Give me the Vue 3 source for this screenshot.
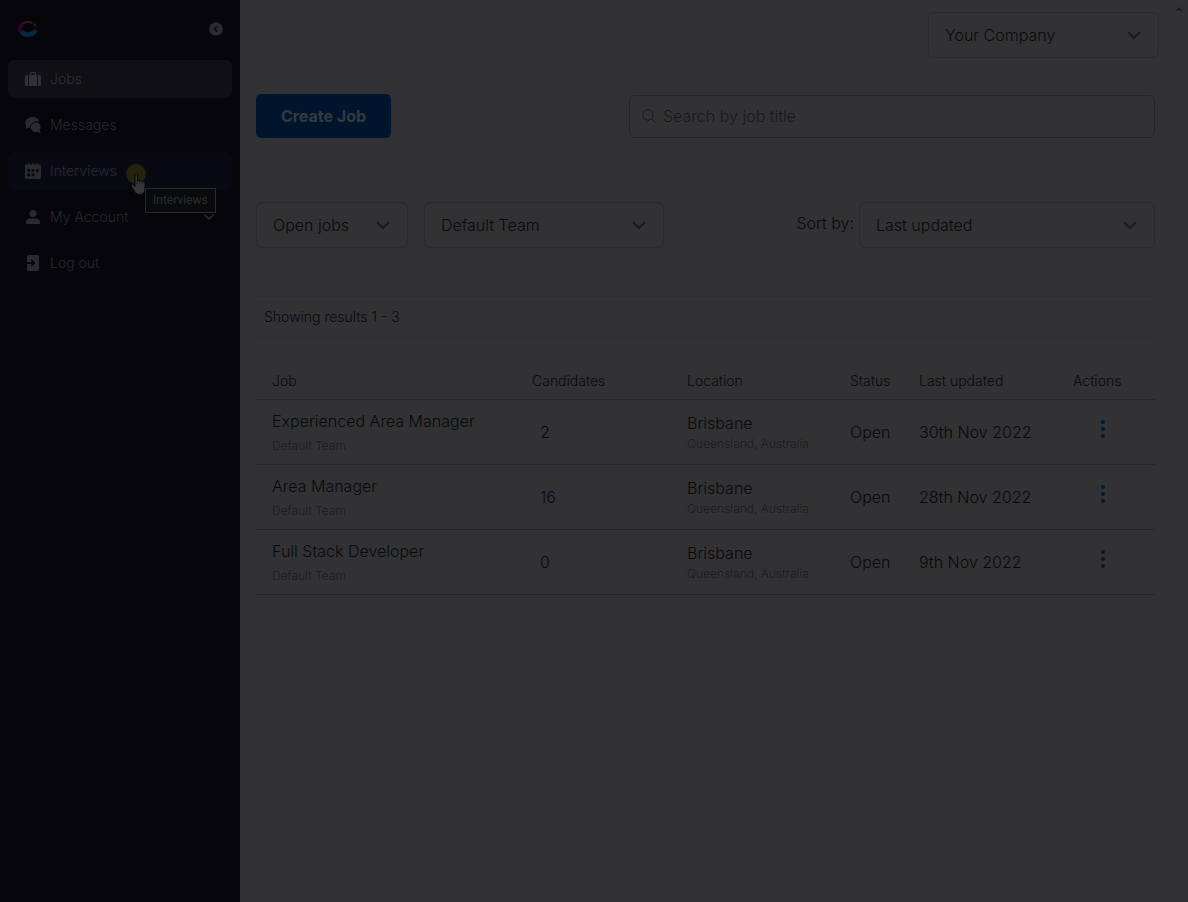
<template>
  <div class="app">
    <aside class="sidebar">
      <div class="brand">
        <svg class="logo" viewBox="0 0 20 16">
          <path d="M3 11C.5 7.500 2 4 5.500 2.700" stroke="#2c0626" stroke-width="4" />
          <path d="M5 2.200C8 .8 12 .8 14.500 2.200" stroke="#352018" stroke-width="2" />
          <circle cx="17" cy="4" r="1.400" fill="#35191c" />
          <path d="M3.500 10.500C6 14.800 14 15 18 9" stroke="#06293b" stroke-width="4.500" />
        </svg>
        <button class="collapse" aria-label="Collapse menu">
          <svg viewBox="0 0 14 14">
            <circle cx="7" cy="7" r="6.800" fill="#2a2a2f" />
            <path d="M8.200 4.200L5.500 7l2.700 2.800" stroke="#07070c" stroke-width="1.600" />
          </svg>
        </button>
      </div>

      <nav class="menu">
        <a href="#" class="item active">
          <svg class="icon" viewBox="0 0 16 16">
            <path d="M1.500 4H3v11H1.500A1.500 1.500 0 0 1 0 13.500v-8A1.500 1.500 0 0 1 1.500 4zM13 4h1.500A1.500 1.500 0 0 1 16 5.500v8a1.500 1.500 0 0 1-1.500 1.500H13zM4 4h1V2a1 1 0 0 1 1-1h4a1 1 0 0 1 1 1v2h1v11H4zM6.200 4h3.600V2.300H6.200z" fill-rule="evenodd" />
          </svg>
          <span>Jobs</span>
        </a>
        <a href="#" class="item">
          <svg class="icon" viewBox="0 0 16 16">
            <path d="M7.500 0c3.600 0 6.500 1.900 7 4.600C9.500 3.300 5.300 6.200 5 11c-.5-.1-1-.2-1.400-.4-.9.800-2 1.200-3.600 1.200.8-.8 1.200-1.600 1.400-2.600C.7 8.300.3 7 .3 5.700.3 2.500 3.500 0 7.500 0z" />
            <path d="M11 5.600c2.600 0 4.600 1.900 4.600 4.400 0 1.200-.4 2.200-1.100 3 .2 1.100.7 2 1.500 2.900-1.400.1-2.500-.2-3.500-1-3.600.9-6.700-1.300-6.700-4.400 0-2.800 2.200-4.900 5.200-4.900z" />
          </svg>
          <span>Messages</span>
        </a>
        <a href="#" class="item hover">
          <svg class="icon" viewBox="0 0 16 16">
            <path d="M1 1.500h2V0h1.600v1.500h2.600V0h1.600v1.500h2.600V0H13v1.500h2A1 1 0 0 1 16 2.500V15a1 1 0 0 1-1 1H1a1 1 0 0 1-1-1V2.500A1 1 0 0 1 1 1.500zM6.600 6v2.800h2.800V6zM11 6v2.800h2.800V6zM2.200 10.400v2.800H5v-2.800zM6.600 10.400v2.800h2.800v-2.800zM2.200 6v2.800H5V6z" fill-rule="evenodd" />
          </svg>
          <span>Interviews</span>
          <i class="spot"></i>
          <svg class="hand" viewBox="0 0 17 23">
            <path d="M5 1.500C5 .6 7.500.6 7.500 1.500V8c.6-1 2.500-.6 2.500.5.600-.9 2.400-.5 2.500.6.700-.7 2.500-.3 2.500 1.200V16c0 3.500-2 5.500-5.500 5.500-3 0-4.400-1.500-5.500-3.700L1.200 13c-.6-1.500 1.200-2.300 2.200-1.200L5 13.500z" fill="#363636" stroke="#050507" />
            <path d="M7.500 8v3M10 8.800v2.500M12.500 9.500v2" stroke="#19191b" stroke-width=".8" />
          </svg>
          <span class="tooltip">Interviews</span>
        </a>
        <button class="item">
          <svg class="icon" viewBox="0 0 16 16">
            <circle cx="8" cy="4.500" r="3.500" />
            <path d="M1 15v-1.500C1 10.500 3.500 9.500 5.500 9.500h5c2 0 4.500 1 4.500 4V15z" />
          </svg>
          <span>My Account</span>
          <svg class="chevron small" viewBox="0 0 14 8"><path d="M1.500 1L7 6.500 12.500 1" /></svg>
        </button>
        <a href="#" class="item">
          <svg class="icon" viewBox="0 0 16 16">
            <path d="M3.500 0h9A1.500 1.500 0 0 1 14 1.500v13a1.500 1.500 0 0 1-1.500 1.500h-9A1.500 1.500 0 0 1 2 14.500V9h5.200l-1.600 1.600 1.100 1.100L10.500 8 6.700 4.300 5.600 5.400 7.200 7H2V1.500A1.500 1.500 0 0 1 3.500 0z" />
          </svg>
          <span>Log out</span>
        </a>
      </nav>
    </aside>

    <main class="main">
      <i class="scroll-arrow"></i>
      <header class="top">
        <div class="select company">
          <select aria-label="Company">
            <option>Your Company</option>
          </select>
          <svg class="chevron" viewBox="0 0 14 8"><path d="M1 1l6 6 6-6" /></svg>
        </div>
      </header>

      <section class="tools">
        <button class="create">Create Job</button>
        <label class="search">
          <svg viewBox="0 0 14 14">
            <circle cx="6" cy="6" r="5.200" />
            <path d="M9.800 9.800l3.700 3.700" />
          </svg>
          <input type="text" placeholder="Search by job title" aria-label="Search by job title">
        </label>
      </section>

      <section class="filters">
        <div class="select state">
          <select aria-label="Job status">
            <option>Open jobs</option>
          </select>
          <svg class="chevron" viewBox="0 0 14 8"><path d="M1 1l6 6 6-6" /></svg>
        </div>
        <div class="select team">
          <select aria-label="Team">
            <option>Default Team</option>
          </select>
          <svg class="chevron" viewBox="0 0 14 8"><path d="M1 1l6 6 6-6" /></svg>
        </div>
        <label class="sort-label" for="sort">Sort by:</label>
        <div class="select sort">
          <select id="sort">
            <option>Last updated</option>
          </select>
          <svg class="chevron" viewBox="0 0 14 8"><path d="M1 1l6 6 6-6" /></svg>
        </div>
      </section>

      <p class="results">Showing results 1 - {{ jobs.length }}</p>

      <table class="jobs">
        <thead>
          <tr>
            <th class="c-job">Job</th>
            <th class="c-candidates">Candidates</th>
            <th class="c-location">Location</th>
            <th class="c-status">Status</th>
            <th class="c-updated">Last updated</th>
            <th class="c-actions">Actions</th>
          </tr>
        </thead>
        <tbody>
          <tr v-for="job in jobs" :key="job.title">
            <td>
              <div class="title">{{ job.title }}</div>
              <div class="sub team-name">{{ job.team }}</div>
            </td>
            <td class="count">{{ job.candidates }}</td>
            <td>
              <div class="title">{{ job.city }}</div>
              <div class="sub">{{ job.region }}</div>
            </td>
            <td>{{ job.status }}</td>
            <td>{{ job.updated }}</td>
            <td class="actions">
              <button class="more" :aria-label="'Actions for ' + job.title">
                <svg viewBox="0 0 4 18">
                  <circle cx="2" cy="2" r="2" />
                  <circle cx="2" cy="9" r="2" />
                  <circle cx="2" cy="16" r="2" />
                </svg>
              </button>
            </td>
          </tr>
        </tbody>
      </table>
    </main>
  </div>
</template>

<script setup>
import { ref } from 'vue'

const place = { city: 'Brisbane', region: 'Queensland, Australia' }

const jobs = ref([
  { title: 'Experienced Area Manager', team: 'Default Team', candidates: 2, ...place, status: 'Open', updated: '30th Nov 2022' },
  { title: 'Area Manager', team: 'Default Team', candidates: 16, ...place, status: 'Open', updated: '28th Nov 2022' },
  { title: 'Full Stack Developer', team: 'Default Team', candidates: 0, ...place, status: 'Open', updated: '9th Nov 2022' },
])
</script>

<style>
body {
  background: #323234;
}
</style>

<style scoped>
.app {
  display: flex;
  min-height: 100vh;
  background: #323234;
  color: #09090b;
  font-family: Inter, "Liberation Sans", sans-serif;
  font-size: 16px;
  font-weight: 300;
  line-height: 24px;
}
.app * {
  box-sizing: border-box;
}
button, input, select {
  font: inherit;
  color: inherit;
  background: none;
  border: none;
  padding: 0;
  margin: 0;
}
svg {
  display: block;
  fill: none;
}

/* sidebar */
.sidebar {
  flex: 0 0 240px;
  padding: 0 8px;
  background: #05050a;
}
.brand {
  display: flex;
  align-items: center;
  justify-content: space-between;
  height: 60px;
  padding: 0 9px 2px 10px;
}
.logo {
  width: 20px;
  height: 16px;
}
.collapse svg {
  width: 14px;
  height: 14px;
}
.menu {
  display: flex;
  flex-direction: column;
  gap: 8px;
}
.item {
  position: relative;
  display: flex;
  align-items: center;
  gap: 9px;
  height: 38px;
  padding: 0 17px;
  border-radius: 6px;
  color: #2a2a2e;
  font-size: 14px;
  text-decoration: none;
}
.item.active {
  background: #0f0f14;
  color: #323236;
}
.item.hover {
  background: #090914;
}
.icon {
  width: 16px;
  height: 16px;
  fill: currentColor;
}
.chevron {
  width: 14px;
  height: 8px;
  stroke: #1b1b1d;
  stroke-width: 2;
}
.chevron.small {
  width: 12px;
  margin-left: auto;
  stroke: #28282c;
}
.spot {
  position: absolute;
  left: 118px;
  top: 12px;
  width: 20px;
  height: 20px;
  border-radius: 50%;
  background: #25240a;
}
.hand {
  position: absolute;
  left: 122px;
  top: 21px;
  width: 17px;
  height: 23px;
}
.tooltip {
  position: absolute;
  z-index: 1;
  left: 137px;
  top: 36px;
  padding: 0 7px;
  border: 1px solid #29292a;
  background: #090a0b;
  color: #2d2d2f;
  font-family: Roboto, "Noto Sans", sans-serif;
  font-size: 12px;
  font-weight: 400;
  line-height: 23px;
}

/* main column */
.main {
  position: relative;
  flex: 1;
  min-width: 0;
  padding: 12px 33px 24px 16px;
}
.scroll-arrow {
  position: absolute;
  right: 5px;
  top: 7px;
  border: 4px solid transparent;
  border-top: none;
  border-bottom-color: #1e1e1f;
}
.top {
  display: flex;
  justify-content: flex-end;
  margin-right: -4px;
}
.select {
  display: grid;
  align-items: center;
  height: 46px;
}
.select > * {
  grid-area: 1 / 1;
}
.select select {
  width: 100%;
  height: 46px;
  padding: 0 40px 0 16px;
  border: 1px solid #2a2a2b;
  border-radius: 6px;
  appearance: none;
}
.select .chevron {
  justify-self: end;
  margin-right: 18px;
  pointer-events: none;
}
.company {
  width: 231px;
}
.tools {
  display: flex;
  align-items: center;
  justify-content: space-between;
  margin-top: 36px;
}
.create {
  width: 135px;
  height: 44px;
  border-radius: 5px;
  background: #00152d;
  color: #353a3f;
  font-weight: 700;
}
.search {
  display: flex;
  align-items: center;
  gap: 7px;
  width: 526px;
  max-width: 70%;
  height: 43px;
  padding: 0 12px;
  border: 1px solid #242426;
  border-radius: 6px;
}
.search svg {
  width: 14px;
  height: 14px;
  stroke: #1b1b1d;
}
.search input {
  flex: 1;
  min-width: 0;
  outline: none;
}
.search input::placeholder {
  color: #18181a;
  opacity: 1;
}
.filters {
  display: flex;
  margin-top: 64px;
}
.state {
  width: 152px;
}
.team {
  width: 240px;
  margin-left: 16px;
}
.sort-label {
  margin: 9px 5px 0 auto;
}
.sort {
  width: 296px;
}
.results {
  margin: 48px 0 24px;
  padding: 8px;
  border-top: 1px solid #2e2e2f;
  border-bottom: 1px solid #2e2e30;
  font-size: 14px;
}

/* jobs table */
.jobs {
  width: 100%;
  table-layout: fixed;
  border-collapse: separate;
  border-spacing: 0;
}
th, td {
  padding: 0 0 0 16px;
  border-bottom: 1px solid #272729;
  text-align: left;
  white-space: nowrap;
}
th {
  height: 38px;
  font-size: 14px;
  font-weight: 300;
}
td {
  height: 65px;
}
.c-job {
  width: 260px;
}
.c-candidates {
  width: 155px;
}
.c-location {
  width: 163px;
}
.c-status {
  width: 69px;
}
.c-updated {
  width: 154px;
}
.c-actions {
  width: 98px;
}
.sub {
  color: #1b1b1d;
  font-size: 12px;
  line-height: 18px;
}
.team-name {
  margin-top: 4px;
}
.count {
  padding-left: 24px;
}
.actions {
  padding: 0 0 6px 34px;
}
.more {
  display: block;
  padding: 0 10px;
}
.more svg {
  width: 4px;
  height: 18px;
  fill: #021a2d;
}
</style>
